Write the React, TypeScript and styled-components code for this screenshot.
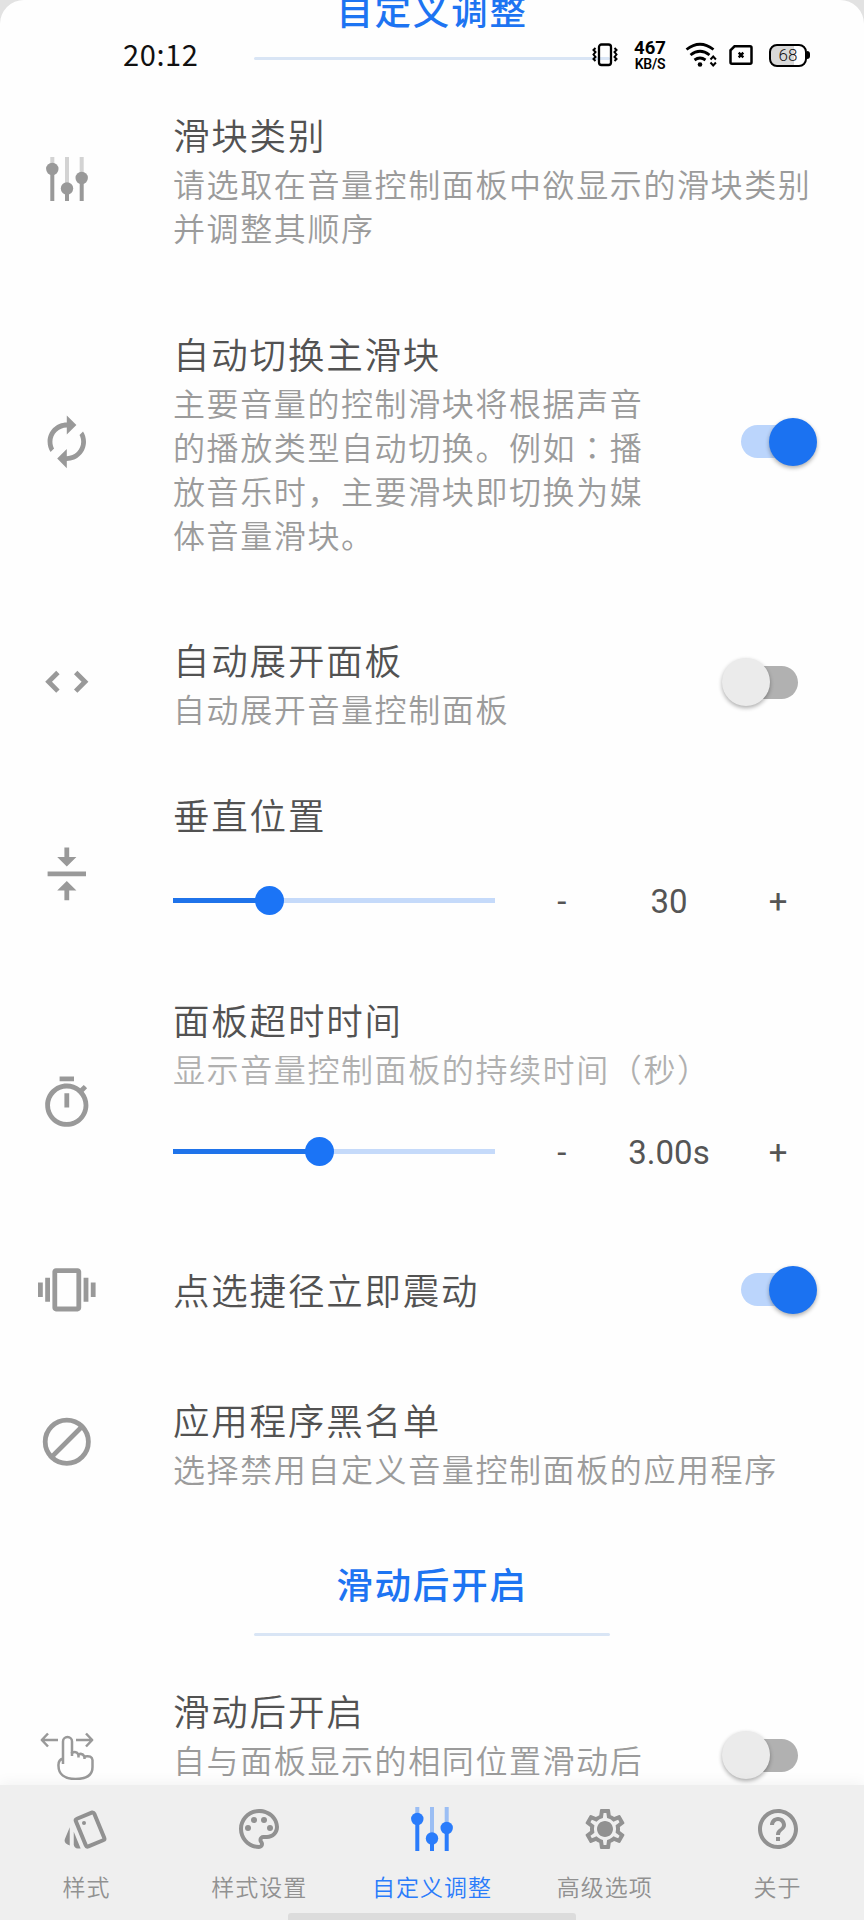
import React from 'react';
import styled, { createGlobalStyle } from 'styled-components';
import { MdOutlinePalette, MdOutlineSettings, MdOutlineStyle, MdHelpOutline } from 'react-icons/md';

const Global = createGlobalStyle`
  * { box-sizing: border-box; }
  html, body { margin: 0; padding: 0; background: #e2e2e2; overflow: hidden; }
  button { all: unset; cursor: pointer; }
`;

const blue = '#1d74f2';
const grey = '#999';

const Phone = styled.div`
  position: relative;
  width: 864px;
  height: 1920px;
  overflow: hidden;
  display: flex;
  flex-direction: column;
  background: #fefefe;
  border-radius: 24px 24px 0 0;
  font-family: Roboto, 'Noto Sans CJK SC', sans-serif;
`;

const StatusBar = styled.header`
  position: absolute;
  z-index: 2;
  top: 30px;
  left: 0;
  width: 100%;
  height: 50px;
  padding: 0 57px 0 123px;
  display: flex;
  align-items: center;
  justify-content: space-between;
  color: #111;
`;

const Clock = styled.time`
  font: 400 29px/46px 'Noto Sans CJK SC', sans-serif;
  letter-spacing: 0.6px;
  padding-bottom: 5px;
`;

const StatusIcons = styled.div`
  display: flex;
  align-items: center;
  svg { flex: none; }
`;

const Speed = styled.div`
  width: 34px;
  margin: 1px 18px 0 15px;
  display: flex;
  flex-direction: column;
  align-items: center;
  color: #000;
  font: 700 18.5px/17px Roboto, sans-serif;
  white-space: nowrap;
  small {
    font-size: 14px;
    font-weight: 600;
    line-height: 14px;
    letter-spacing: -0.3px;
  }
`;

const Battery = styled.div`
  position: relative;
  width: 38px;
  height: 23px;
  margin-left: 16px;
  border: 2.5px solid #000;
  border-radius: 8px;
  background: linear-gradient(90deg, #d9d9d9 68%, #fff 68%);
  font: 300 17px/19px Roboto, sans-serif;
  text-align: center;
  &::after {
    content: '';
    position: absolute;
    right: -5px;
    top: 5px;
    width: 3px;
    height: 8px;
    border-radius: 0 3px 3px 0;
    background: #000;
  }
`;

const Content = styled.main`
  flex: 1;
  min-height: 0;
  overflow: hidden;
`;

const Heading = styled.section<{ $h: number; $pad: number; $gap: number }>`
  height: ${p => p.$h}px;
  margin-top: ${p => Math.min(p.$pad, 0)}px;
  padding-top: ${p => Math.max(p.$pad, 0)}px;
  display: flex;
  flex-direction: column;
  align-items: center;
  h2 {
    margin: 0 0 ${p => p.$gap}px;
    color: ${blue};
    font: 500 36.5px/54px 'Noto Sans CJK SC', sans-serif;
    letter-spacing: 1.8px;
    white-space: nowrap;
  }
`;

const Rule = styled.div`
  width: 356px;
  height: 3px;
  flex: none;
  border-radius: 2px;
  background: #d9e5f5;
`;

const Row = styled.section<{ $h: number }>`
  height: ${p => p.$h}px;
  display: grid;
  grid-template-columns: 134.5px 1fr auto;
  align-items: center;
`;

const IconCell = styled.div`
  display: flex;
  justify-content: center;
  color: ${grey};
  svg { display: block; }
`;

const Body = styled.div<{ $top?: number }>`
  min-width: 0;
  height: ${p => (p.$top === undefined ? 'auto' : '100%')};
  padding: ${p => p.$top ?? 0}px 0 1px 38.5px;
`;

const Title = styled.h3`
  margin: 0;
  color: #525252;
  font: 350 36.5px/53px 'Noto Sans CJK SC', sans-serif;
  letter-spacing: 1.8px;
  white-space: nowrap;
`;

const Desc = styled.p<{ $faded?: boolean; $min?: number }>`
  margin: 0;
  min-height: ${p => p.$min ?? 0}px;
  color: ${p => (p.$faded ? '#b0b0b0' : '#9b9b9b')};
  font: 350 32px/44px 'Noto Sans CJK SC', sans-serif;
  letter-spacing: 1.6px;
  white-space: pre-line;
`;

const CenteredColon = styled.span`
  font-family: 'Noto Sans CJK TC', sans-serif;
`;

const SwitchButton = styled.button<{ $on: boolean }>`
  position: relative;
  width: 76px;
  height: 48px;
  margin-right: ${p => (p.$on ? 47 : 66)}px;
  display: flex;
  align-items: center;
  justify-content: ${p => (p.$on ? 'flex-start' : 'flex-end')};
  &::before {
    content: '';
    width: 57px;
    height: 33px;
    border-radius: 17px;
    background: ${p => (p.$on ? '#bbd5fc' : '#b1b1b1')};
  }
  &::after {
    content: '';
    position: absolute;
    top: 0;
    ${p => (p.$on ? 'right' : 'left')}: 0;
    width: 48px;
    height: 48px;
    border-radius: 50%;
    background: ${p => (p.$on ? '#1b72f1' : '#ebebeb')};
    box-shadow: 0 2px 4px rgba(0, 0, 0, 0.32);
  }
`;

const Controls = styled.div<{ $mt: number }>`
  margin-top: ${p => p.$mt}px;
  height: 48px;
  display: grid;
  grid-template-columns: 321.5px 134.5px 80px 138px;
  align-items: center;
  color: #555;
  font: 400 33px/48px Roboto, sans-serif;
  text-align: center;
`;

const Track = styled.div`
  position: relative;
  height: 5px;
  background: #c5dafa;
`;

const Fill = styled.div`
  height: 100%;
  background: #1f73ea;
`;

const Thumb = styled.div`
  position: absolute;
  top: -12px;
  width: 29px;
  height: 29px;
  margin-left: -14.5px;
  border-radius: 50%;
  background: #1b74f6;
`;

const Value = styled.span`
  display: flex;
  justify-content: center;
  padding-top: 3px;
  white-space: nowrap;
`;

const Step = styled.button`
  padding-top: 3px;
  text-align: center;
`;

const Nav = styled.nav`
  position: relative;
  height: 135px;
  flex: none;
  display: grid;
  grid-template-columns: repeat(5, 1fr);
  background: #efefef;
  box-shadow: 0 -2px 14px rgba(0, 0, 0, 0.05);
`;

const Tab = styled.button<{ $active?: boolean }>`
  display: grid;
  grid-template-rows: 48px 34px;
  row-gap: 16px;
  justify-items: center;
  align-items: center;
  align-content: start;
  padding-top: 20px;
  color: ${p => (p.$active ? '#2a7cfb' : '#919191')};
  font: 350 23px/34px 'Noto Sans CJK SC', sans-serif;
  letter-spacing: 1px;
  white-space: nowrap;
`;

const HomeBar = styled.div`
  position: absolute;
  left: 288px;
  bottom: 0;
  width: 288px;
  height: 7px;
  border-radius: 3px 3px 0 0;
  background: #dcdcdc;
`;

const Material = ({ d, turn = 0 }: { d: string; turn?: number }) => (
  <svg width="57.6" height="57.6" viewBox="0 0 24 24" fill="currentColor">
    <path d={d} transform={`rotate(${turn} 12 12)`} />
  </svg>
);

const Sliders = () => (
  <svg width="44" height="44" viewBox="0 0 44 44" fill="currentColor">
    <g opacity="0.42">
      <rect x="5.3" width="4" height="12" />
      <rect x="20" width="4" height="32" />
      <rect x="34.7" width="4" height="22" />
    </g>
    <rect x="5.3" y="12" width="4" height="32" />
    <rect x="20" y="32" width="4" height="12" />
    <rect x="34.7" y="22" width="4" height="22" />
    <circle cx="7.3" cy="12" r="6.2" />
    <circle cx="22" cy="31.5" r="6.2" />
    <circle cx="36.7" cy="21" r="6.2" />
  </svg>
);

const Blocked = () => (
  <svg width="57.6" height="57.6" viewBox="0 0 24 24" fill="none" stroke="currentColor" strokeWidth="2">
    <circle cx="12" cy="12" r="9" />
    <path d="M5 19 19 5" />
  </svg>
);

const SwipeHand = () => (
  <svg width="54" height="50" viewBox="0 -1 54 50" fill="none" stroke="currentColor" strokeWidth="2.5" strokeLinejoin="round">
    <path d="M18 9H2M8 2.500 1.800 9 8 15.500M36 9h16M46 2.500 52.200 9 46 15.500" />
    <path d="M23 33V10.500a4.500 4.500 0 0 1 9 0V22q4-2.500 6.500 1.500 3.500-2 6 2 7.500-1.500 8 3.500v7c0 8-6 12-17 12S18.500 43 18.500 35q-.500-6 4.500-7.500" />
    <path d="M32 21v4M38.500 23v3.500M44.500 25v3" />
  </svg>
);

const PhoneVibrate = () => (
  <svg width="26" height="24" viewBox="0 0 26 24" fill="none" stroke="#000">
    <rect x="7" y="1.500" width="12" height="20.500" rx="2.500" strokeWidth="2.300" />
    <path d="M3.500 5 1.500 7l2 2-2 2.500 2 2.500-2 2 2 2M22.500 5l2 2-2 2 2 2.500-2 2.500 2 2-2 2" strokeWidth="2" />
  </svg>
);

const Wifi = () => (
  <svg width="32" height="26" viewBox="0 0 32 26" fill="none" stroke="#000" strokeWidth="2.800">
    <path d="M1.500 7.500Q15 -3 28.500 7.500M5.500 13Q15 5.500 24.500 13M9.500 18Q15 14 20.500 18" />
    <circle cx="15" cy="22.500" r="2.300" fill="#000" stroke="none" />
    <path d="m25.500 17.500 2.700-3 2.700 3M25.500 20.500l2.700 3 2.700-3" strokeWidth="2" />
  </svg>
);

const SimSvg = styled.svg`
  margin-left: 12px;
`;

const Sim = () => (
  <SimSvg width="24" height="20" viewBox="0 0 24 20" fill="none" stroke="#000" strokeWidth="2.500">
    <path d="M5.500 1.300H21q1.500 0 1.500 1.500v14.400q0 1.500-1.500 1.500H3q-1.500 0-1.500-1.500V5.300Z" />
    <path d="m9.700 7.700 4.600 4.600m0-4.600-4.600 4.600" strokeWidth="2.400" />
  </SimSvg>
);

const Switch = ({ on = false }: { on?: boolean }) => (
  <SwitchButton $on={on} role="switch" aria-checked={on} />
);

const Slider = ({ percent, value, mt }: { percent: number; value: string; mt: number }) => (
  <Controls $mt={mt}>
    <Track>
      <Fill style={{ width: `${percent}%` }} />
      <Thumb style={{ left: `${percent}%` }} />
    </Track>
    <Step>-</Step>
    <Value>{value}</Value>
    <Step>+</Step>
  </Controls>
);

const paths = {
  renew: 'M12 6v3l4-4-4-4v3c-4.42 0-8 3.58-8 8 0 1.57.46 3.03 1.24 4.26L6.700 14.800c-.450-.830-.700-1.790-.700-2.800 0-3.310 2.690-6 6-6zm6.760 1.740L17.300 9.200c.440.840.700 1.790.700 2.800 0 3.310-2.690 6-6 6v-3l-4 4 4 4v-3c4.420 0 8-3.580 8-8 0-1.570-.460-3.030-1.240-4.260z',
  unfold: 'M12 5.83L15.17 9l1.410-1.410L12 3 7.410 7.590 8.830 9 12 5.830zm0 12.340L8.830 15l-1.410 1.410L12 21l4.590-4.590L15.170 15 12 18.170z',
  vertical: 'M8 19h3v4h2v-4h3l-4-4-4 4zm8-14h-3V1h-2v4H8l4 4 4-4zM4 11v2h16v-2H4z',
  timer: 'M15 1H9v2h6V1zm-4 13h2V8h-2v6zm8.030-6.610l1.420-1.420c-.430-.510-.900-.990-1.410-1.410l-1.420 1.420C16.070 4.740 14.120 4 12 4c-4.970 0-9 4.030-9 9s4.020 9 9 9 9-4.030 9-9c0-2.120-.740-4.070-1.970-5.610zM12 20c-3.870 0-7-3.130-7-7s3.130-7 7-7 7 3.130 7 7-3.130 7-7 7z',
  vibration: 'M0 15h2V9H0v6zm3 2h2V7H3v10zm19-8v6h2V9h-2zm-3 8h2V7h-2v10zM16.500 3h-9C6.670 3 6 3.670 6 4.500v15c0 .830.670 1.500 1.500 1.500h9c.830 0 1.500-.670 1.500-1.500v-15c0-.830-.670-1.500-1.500-1.500zM16 19H8V5h8v14z',
};

const SettingsGear = () => (
  <svg width="48" height="48" viewBox="0 0 24 24">
    <MdOutlineSettings size={24} />
    <circle cx="12" cy="12" r="3.500" fill="currentColor" />
  </svg>
);

export default function App() {
  return (
    <>
      <Global />
      <Phone>
        <StatusBar>
          <Clock>20:12</Clock>
          <StatusIcons>
            <PhoneVibrate />
            <Speed>467<small>KB/S</small></Speed>
            <Wifi />
            <Sim />
            <Battery>68</Battery>
          </StatusIcons>
        </StatusBar>
        <Content>
          <Heading $h={72} $pad={-17} $gap={20}>
            <h2>自定义调整</h2>
            <Rule />
          </Heading>
          <Row $h={248}>
            <IconCell><Sliders /></IconCell>
            <Body>
              <Title>滑块类别</Title>
              <Desc>{'请选取在音量控制面板中欲显示的滑块类别\n并调整其顺序'}</Desc>
            </Body>
          </Row>
          <Row $h={277}>
            <IconCell><Material d={paths.renew} /></IconCell>
            <Body>
              <Title>自动切换主滑块</Title>
              <Desc>
                {'主要音量的控制滑块将根据声音\n的播放类型自动切换。例如'}
                <CenteredColon lang="zh-TW">：</CenteredColon>
                {'播\n放音乐时，主要滑块即切换为媒\n体音量滑块。'}
              </Desc>
            </Body>
            <Switch on />
          </Row>
          <Row $h={204}>
            <IconCell><Material d={paths.unfold} turn={90} /></IconCell>
            <Body>
              <Title>自动展开面板</Title>
              <Desc>自动展开音量控制面板</Desc>
            </Body>
            <Switch />
          </Row>
          <Row $h={180}>
            <IconCell><Material d={paths.vertical} /></IconCell>
            <Body $top={4}>
              <Title>垂直位置</Title>
              <Slider percent={30} value="30" mt={34} />
            </Body>
          </Row>
          <Row $h={277}>
            <IconCell><Material d={paths.timer} /></IconCell>
            <Body $top={29}>
              <Title>面板超时时间</Title>
              <Desc $faded>显示音量控制面板的持续时间（秒）</Desc>
              <Slider percent={45.5} value="3.00s" mt={36} />
            </Body>
          </Row>
          <Row $h={97}>
            <IconCell><Material d={paths.vibration} /></IconCell>
            <Body><Title>点选捷径立即震动</Title></Body>
            <Switch on />
          </Row>
          <Row $h={207}>
            <IconCell><Blocked /></IconCell>
            <Body>
              <Title>应用程序黑名单</Title>
              <Desc>选择禁用自定义音量控制面板的应用程序</Desc>
            </Body>
          </Row>
          <Heading $h={103} $pad={12} $gap={22}>
            <h2>滑动后开启</h2>
            <Rule />
          </Heading>
          <Row $h={214}>
            <IconCell><SwipeHand /></IconCell>
            <Body>
              <Title>滑动后开启</Title>
              <Desc $min={88}>自与面板显示的相同位置滑动后</Desc>
            </Body>
            <Switch />
          </Row>
        </Content>
        <Nav>
          <Tab><MdOutlineStyle size={48} /><span>样式</span></Tab>
          <Tab><MdOutlinePalette size={48} /><span>样式设置</span></Tab>
          <Tab $active><Sliders /><span>自定义调整</span></Tab>
          <Tab><SettingsGear /><span>高级选项</span></Tab>
          <Tab><MdHelpOutline size={48} /><span>关于</span></Tab>
          <HomeBar />
        </Nav>
      </Phone>
    </>
  );
}
